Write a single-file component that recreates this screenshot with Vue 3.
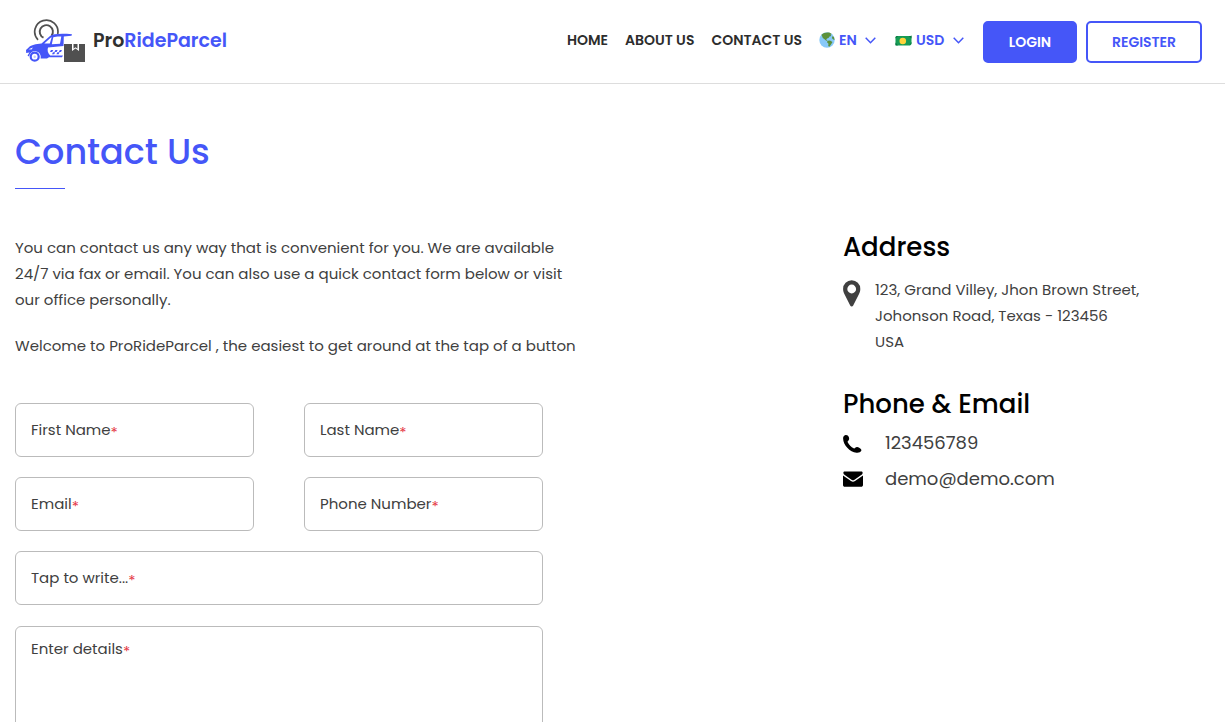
<script setup>
import { ref } from 'vue'

const links = ['HOME', 'ABOUT US', 'CONTACT US']
const language = ref('EN')
const currency = ref('USD')

const fields = [
  { id: 'first-name', label: 'First Name', type: 'text' },
  { id: 'last-name', label: 'Last Name', type: 'text' },
  { id: 'email', label: 'Email', type: 'email' },
  { id: 'phone', label: 'Phone Number', type: 'tel' },
  { id: 'subject', label: 'Tap to write...', type: 'text', wide: true }
]
</script>

<template>
  <div class="page">
    <header class="header">
      <a class="logo" href="#">
        <svg class="logo-mark" viewBox="0 0 60 44" aria-hidden="true">
          <g fill="none" stroke="#505050">
            <path d="M12 20.800A11.600 11.600 0 1 1 31.700 15" stroke-width="1.700" />
            <path d="M17.500 18.700A6.600 6.600 0 1 1 25.500 16.800" stroke-width="1.900" />
          </g>
          <path d="M46 15.300C34 14.200 27 15 24 17L15.500 24.500C10 25 5 26 3.200 28L0 31 .2 34 3.500 33.500 1.500 36.500 3 37.500C4 33.500 7 31.600 10 32.200 13.700 33 15.300 36 14.600 39.500H21L23 38.200H36L37 36.400H24.200C21.600 34 21.200 31 22 28.500L37.500 27 37.800 17.400 45.500 16.800Z" fill="#4556f8" />
          <path d="M18.300 24.600L24.600 18.800 25.700 18.300 23.800 24.600Z M27.300 18.200C29.500 17.500 32 17.400 35.300 17.500L34 24.800 25.800 25.200Z" fill="#fff" />
          <path d="M2.500 30.200L7 28.400 5.500 30.500Z" fill="#fff" />
          <circle cx="8.700" cy="37.700" r="4" fill="#fff" stroke="#4556f8" stroke-width="2.200" />
          <circle cx="8.700" cy="37.700" r="1.200" fill="#c4c9ff" />
          <path d="M25 31h2.200l-1 2H24zM29.400 31h2.200l-1 2h-2.200zM33.800 31H36l-1 2h-2.200zM27 33.200h2.200l-1 2H26zM31.400 33.200h2.200l-1 2h-2.200z" fill="#4556f8" />
          <path d="M38 25h21v18H38z" fill="#505050" />
          <path d="M46 25h1.500v4.700l2-1.500 2 1.500V25H53v7l-3.500-2.600L46 32z" fill="#fff" />
        </svg>
        <span class="brand">Pro<span>RideParcel</span></span>
      </a>
      <nav class="nav">
        <a v-for="link in links" :key="link" href="#">{{ link }}</a>
      </nav>
      <div class="pickers">
        <div class="picker language">
          <svg class="globe" viewBox="0 0 16 16" aria-hidden="true">
            <circle cx="8" cy="8" r="7.700" fill="#88c9f9" />
            <path d="M2.500 2.800C4.500 .8 8 .1 10.800.8L12.800 2 11.500 2.800 12.300 4 10.500 4.500 9.500 6 8 6.500 7.200 8 8.600 9 7.500 9 5.500 7.300 3.800 6 3 3.900zM8.500 8.700L11 8.400 13.500 10 12 12.500 10.400 14.800 9.200 14 9.500 11.800 8 10.200zM13.700 4L15 5.200 15.600 8 14.300 7.600 12.800 6z" fill="#5c913b" />
          </svg>
          <select v-model="language" aria-label="Language">
            <option>EN</option>
            <option>ES</option>
          </select>
          <svg class="chevron" viewBox="0 0 11 7" aria-hidden="true"><path d="M.7.8L5.500 5.700 10.300.8" /></svg>
        </div>
        <div class="picker currency">
          <svg class="note" viewBox="0 0 17 11" aria-hidden="true">
            <path d="M.5 2.500Q.500 1 2 1H15.500Q16.500 1 16.500 .5V8.500Q16.500 10.500 14.500 10.500H2Q.5 10.500 .5 10Z" fill="#169b55" />
            <path d="M.5 2.500Q.5 1 2 1H3.200L.5 3.600zM16.500 .5V3.400L13.600 1H15.500zM.5 10.300V7.400L3 10.500zM16.500 8.500L14 10.500 16.500 7z" fill="#087540" />
            <circle cx="7.800" cy="6" r="3.300" fill="#ffd43b" />
          </svg>
          <select v-model="currency" aria-label="Currency">
            <option>USD</option>
            <option>EUR</option>
          </select>
          <svg class="chevron" viewBox="0 0 11 7" aria-hidden="true"><path d="M.7.8L5.500 5.700 10.300.8" /></svg>
        </div>
      </div>
      <div class="actions">
        <button class="login" type="button">LOGIN</button>
        <button class="register" type="button">REGISTER</button>
      </div>
    </header>

    <main class="main">
      <h1>Contact Us</h1>
      <div class="columns">
        <section class="form-side">
          <p>You can contact us any way that is convenient for you. We are available 24/7 via fax or email. You can also use a quick contact form below or visit our office personally.</p>
          <p>Welcome to ProRideParcel , the easiest to get around at the tap of a button</p>
          <form class="form" @submit.prevent>
            <div v-for="f in fields" :key="f.id" class="field" :class="{ wide: f.wide }">
              <input :id="f.id" :type="f.type" required>
              <label :for="f.id">{{ f.label }}<span>*</span></label>
            </div>
            <div class="field wide details">
              <textarea id="details" required></textarea>
              <label for="details">Enter details<span>*</span></label>
            </div>
          </form>
        </section>
        <aside class="info">
          <h2>Address</h2>
          <div class="address">
            <svg class="pin" viewBox="0 0 18 27" aria-hidden="true">
              <path fill-rule="evenodd" d="M8.700 .3A8.600 8.600 0 0 0 .1 9c0 2 .6 3.600 1.400 5.200l5.700 11.400c.6 1.200 2.400 1.200 3 0l5.700-11.400C16.700 12.600 17.300 11 17.300 9A8.600 8.600 0 0 0 8.700 .3zm0 4.300a4.400 4.400 0 1 1 0 8.800 4.400 4.400 0 0 1 0-8.800z" fill="#404040" />
            </svg>
            <address>123, Grand Villey, Jhon Brown Street,<br>Johonson Road, Texas - 123456<br>USA</address>
          </div>
          <h2>Phone &amp; Email</h2>
          <div class="contacts">
            <a class="contact" href="tel:123456789">
              <svg viewBox="0 0 20 20" aria-hidden="true">
                <path d="M2.500 2C4 1.700 5.300 2.500 5.800 4 6.500 5.800 6.200 7 5 8 4.600 8.400 4.500 8.800 4.700 9.300 5.900 11.800 8.200 14.100 10.700 15.300 11.200 15.600 11.600 15.500 12 15.100 13 13.900 14.500 13.700 16.200 14.700 17.900 15.700 18.700 16.800 18.300 17.800 17.700 19.300 15.700 19.900 13.500 19.700 6.800 19.200.2 12 .1 5.500 0 3.600 1 2.300 2.500 2Z" />
              </svg>
              123456789
            </a>
            <a class="contact" href="mailto:demo@demo.com">
              <svg viewBox="0 0 20 20" aria-hidden="true">
                <path d="M1.700 2.500h16.600c1 0 1.500.7 1.300 1.700-.1.800-.7 1.400-1.400 1.900l-6.700 4.600c-.5.4-1 .6-1.500.6s-1-.2-1.500-.6L1.800 6.100C1.100 5.600.5 5 .4 4.200c-.2-1 .3-1.700 1.300-1.700z" />
                <path d="M0 6.600l8 5.400c1.300.9 2.700.9 4 0l8-5.400v9.400c0 1-.8 1.800-1.800 1.800H1.800C.8 17.800 0 17 0 16z" />
              </svg>
              demo@demo.com
            </a>
          </div>
        </aside>
      </div>
    </main>
  </div>
</template>

<style>
body {
  margin: 0;
  background: #fff;
}
</style>

<style scoped>
.page {
  font-family: Poppins, Inter, "Open Sans", sans-serif;
  font-size: 15px;
  line-height: 26px;
  color: #404040;
}
.page * {
  box-sizing: border-box;
}
a {
  color: inherit;
  text-decoration: none;
}
.header {
  display: flex;
  align-items: center;
  height: 84px;
  padding: 0 23px 0 26px;
  border-bottom: 1px solid #ddd;
}
.logo {
  display: flex;
  align-items: center;
  gap: 7px;
  margin-right: auto;
  padding-bottom: 2px;
}
.logo-mark {
  width: 60px;
  height: 44px;
}
.brand {
  font-size: 19px;
  font-weight: 600;
  color: #303030;
}
.brand span {
  color: #4556f8;
}
.nav {
  display: flex;
  gap: 17px;
  margin-right: 17px;
  padding-bottom: 3px;
  font-size: 14px;
  font-weight: 600;
  color: #2d2d2d;
}
.pickers {
  display: flex;
  gap: 19px;
  margin-right: 19px;
  padding-bottom: 3px;
}
.picker {
  display: flex;
  align-items: center;
  gap: 4px;
}
.picker select {
  appearance: none;
  height: 26px;
  padding: 0;
  border: 0;
  background: none;
  font: inherit;
  font-size: 14px;
  font-weight: 600;
  color: #4556f8;
}
.language select {
  width: 18px;
}
.currency select {
  width: 29px;
}
.globe {
  width: 16px;
  height: 16px;
}
.note {
  width: 17px;
  height: 11px;
}
.chevron {
  width: 11px;
  height: 7px;
  fill: none;
  stroke: #4556f8;
  stroke-width: 1.5;
  margin-left: 4px;
  pointer-events: none;
}
.actions {
  display: flex;
  gap: 9px;
}
.actions button {
  height: 42px;
  padding: 0;
  border: 2px solid #4556f8;
  border-radius: 5px;
  font: inherit;
  font-size: 14px;
  font-weight: 600;
}
.login {
  width: 94px;
  background: #4556f8;
  color: #fff;
}
.register {
  width: 116px;
  background: #fff;
  color: #4556f8;
}
.main {
  padding: 41px 15px 40px;
}
h1 {
  margin: 0 0 46px;
  font-size: 35px;
  line-height: 54px;
  font-weight: 500;
  color: #4556f8;
}
h1::after {
  content: "";
  display: block;
  width: 50px;
  height: 1px;
  margin-top: 9px;
  background: #4556f8;
}
.columns {
  display: grid;
  grid-template-columns: minmax(0, 1fr) 367px;
}
.form-side p {
  max-width: 572px;
  margin: 0 0 20px;
}
.form {
  display: grid;
  grid-template-columns: 1fr 1fr;
  gap: 20px 50px;
  max-width: 528px;
  margin-top: 44px;
}
.field {
  position: relative;
}
.wide {
  grid-column: 1 / -1;
}
.field input,
.field textarea {
  display: block;
  width: 100%;
  height: 54px;
  padding: 0 15px;
  border: 1px solid #bbb;
  border-radius: 6px;
  background: #fff;
  font: inherit;
  color: inherit;
  resize: none;
}
.field textarea {
  height: 136px;
  padding: 12px 15px;
}
.field label {
  position: absolute;
  top: 14px;
  left: 16px;
  pointer-events: none;
}
.details {
  margin-top: 1px;
}
.details label {
  top: 10px;
}
.field label span {
  font-size: 15px;
  line-height: 0;
  vertical-align: -3px;
  color: #e53946;
}
.info {
  margin-top: -8px;
}
.info h2 {
  margin: 0;
  font-size: 26px;
  line-height: 40px;
  font-weight: 500;
  color: #000;
}
.address {
  display: flex;
  gap: 14px;
  margin: 10px 0 29px;
}
address {
  font-style: normal;
}
.pin {
  width: 18px;
  height: 27px;
  margin-top: 3px;
}
.contacts {
  margin-top: 1px;
}
.contact {
  display: flex;
  align-items: center;
  gap: 22px;
  height: 36px;
  font-size: 18px;
}
.contact svg {
  width: 20px;
  height: 20px;
  fill: #000;
}
</style>
